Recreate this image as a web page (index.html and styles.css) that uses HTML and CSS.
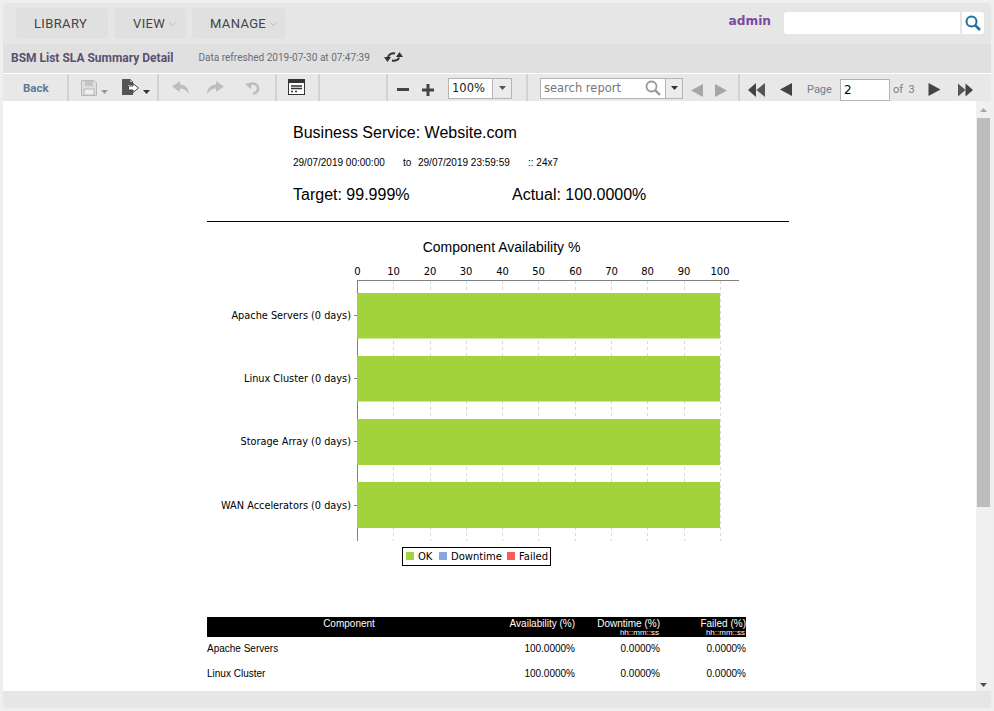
FILE: index.html
```html
<!DOCTYPE html>
<html lang="en">
<head>
<meta charset="utf-8">
<title>BSM List SLA Summary Detail</title>
<link rel="stylesheet" href="styles.css">
</head>
<body>
<div class="frame">
  <header class="topbar">
    <nav class="menu">
      <button class="menu-btn btn-library">LIBRARY</button>
      <button class="menu-btn btn-view">VIEW<svg class="chev" viewBox="0 0 7 4"><path d="M.5.5 3.5 3.5 6.5.5" fill="none" stroke="#bdbdbd"/></svg></button>
      <button class="menu-btn btn-manage">MANAGE<svg class="chev" viewBox="0 0 7 4"><path d="M.5.5 3.5 3.5 6.5.5" fill="none" stroke="#bdbdbd"/></svg></button>
    </nav>
    <span class="user">admin</span>
    <div class="global-search">
      <div class="global-input"></div>
      <div class="global-go">
        <svg width="16" height="16" viewBox="0 0 16 16"><circle cx="6.5" cy="6.5" r="5" fill="none" stroke="#1f6f9f" stroke-width="2"/><path d="M10.3 10.3 15 15" stroke="#1f6f9f" stroke-width="2.6"/></svg>
      </div>
    </div>
  </header>

  <div class="subbar">
    <span class="report-title">BSM List SLA Summary Detail</span>
    <span class="refreshed">Data refreshed 2019-07-30 at 07:47:39</span>
    <svg class="sync" width="19" height="12" viewBox="0 0 19 12"><path d="M4 6.500C4.500 3.500 7.500 1.800 11 2.500" fill="none" stroke="#333" stroke-width="2"/><path d="M15 6.500C14.500 9 11.500 10.200 8 9.500" fill="none" stroke="#333" stroke-width="2"/><path d="M0 6H7L3.500 11Z" fill="#333"/><path d="M12 6H19L15.500 1Z" fill="#333"/></svg>
  </div>

  <div class="toolbar">
    <div class="tgroup g-back"><span class="back">Back</span></div>
    <div class="tgroup g-file">
      <svg class="ic-save" width="16" height="16" viewBox="0 0 16 16"><path d="M.5.500H13L15.500 3V15.500H.5Z" fill="#dedede" stroke="#b8b8b8"/><rect x="4" y="1" width="8" height="5" fill="#c4c4c4"/><rect x="3" y="9" width="10" height="6" fill="#f0f0f0" stroke="#b8b8b8"/></svg>
      <svg class="caret c-save" width="7" height="4" viewBox="0 0 7 4"><path d="M0 0H7L3.500 4Z" fill="#9a9a9a"/></svg>
      <svg class="ic-export" width="17" height="17" viewBox="0 0 17 17"><path d="M0 0H8L11 3V6H6V11H11V16H0Z" fill="#555"/><path d="M8 0 11 3H8Z" fill="#e8e8e8" stroke="#555" stroke-width=".6"/><path d="M6.500 7H11V4.500L16.500 9 11 13.500V11H6.500Z" fill="#fff" stroke="#444"/></svg>
      <svg class="caret c-export" width="7" height="4" viewBox="0 0 7 4"><path d="M0 0H7L3.500 4Z" fill="#333"/></svg>
    </div>
    <div class="tgroup g-edit">
      <svg class="ic-undo" width="17" height="13" viewBox="0 0 17 13"><path d="M8 0 0 5.500 8 11V7.500C11.500 7.500 14.500 9 17 13 16.500 7 13 3.500 8 3.500Z" fill="#bdbdbd"/></svg>
      <svg class="ic-redo" width="17" height="13" viewBox="0 0 17 13"><path d="M9 0 17 5.500 9 11V7.500C5.500 7.500 2.500 9 0 13 .5 7 4 3.500 9 3.500Z" fill="#bdbdbd"/></svg>
      <svg class="ic-reset" width="15" height="14" viewBox="0 0 15 14"><path d="M3.500 5.500A5 5 0 1 1 8 12.500" fill="none" stroke="#bdbdbd" stroke-width="2.600"/><path d="M0 2.500 6.500 2 6 8.500Z" fill="#bdbdbd"/></svg>
    </div>
    <div class="tgroup g-panel">
      <svg class="ic-panel" width="17" height="16" viewBox="0 0 17 16"><rect x=".5" y=".5" width="16" height="15" fill="#fff" stroke="#333"/><rect x="0" y="0" width="17" height="4" fill="#333"/><path d="M3 7H14M3 9.500H14M3 12.500H5M7 12.500H9" stroke="#333" stroke-width="1.300"/></svg>
    </div>
    <div class="tgroup g-blank"></div>
    <div class="tgroup g-zoom">
      <svg class="ic-minus" width="12" height="3" viewBox="0 0 12 3"><rect width="12" height="3" fill="#444"/></svg>
      <svg class="ic-plus" width="12" height="12" viewBox="0 0 12 12"><path d="M4.500 0H7.500V4.500H12V7.500H7.500V12H4.500V7.500H0V4.500H4.500Z" fill="#444"/></svg>
      <div class="combo zoom-combo">
        <span class="combo-text">100%</span>
        <span class="combo-btn"><svg width="7" height="4" viewBox="0 0 7 4"><path d="M0 0H7L3.500 4Z" fill="#555"/></svg></span>
      </div>
    </div>
    <div class="tgroup g-search">
      <div class="combo search-combo">
        <span class="combo-text search-text">search report</span>
        <svg class="ic-find" width="16" height="16" viewBox="0 0 16 16"><circle cx="6.500" cy="6.500" r="5" fill="none" stroke="#999" stroke-width="1.800"/><path d="M10.300 10.300 15 15" stroke="#999" stroke-width="2.400"/></svg>
        <span class="combo-btn"><svg width="7" height="4" viewBox="0 0 7 4"><path d="M0 0H7L3.500 4Z" fill="#333"/></svg></span>
      </div>
      <svg class="ic-hit-prev" width="12" height="13" viewBox="0 0 12 13"><path d="M12 0V13L0 6.500Z" fill="#a6a6a6"/></svg>
      <svg class="ic-hit-next" width="12" height="13" viewBox="0 0 12 13"><path d="M0 0V13L12 6.500Z" fill="#a6a6a6"/></svg>
    </div>
    <div class="tgroup g-pager">
      <svg class="ic-first" width="17" height="14" viewBox="0 0 17 14"><path d="M8 0V14L0 7Z" fill="#444"/><path d="M17 0V14L8.500 7Z" fill="#555"/></svg>
      <svg class="ic-prev" width="12" height="13" viewBox="0 0 12 13"><path d="M12 0V13L0 6.500Z" fill="#444"/></svg>
      <span class="page-label">Page</span>
      <div class="page-input">2</div>
      <span class="page-of">of&nbsp; 3</span>
      <svg class="ic-next" width="13" height="13" viewBox="0 0 12 13"><path d="M0 0V13L12 6.500Z" fill="#444"/></svg>
      <svg class="ic-last" width="15" height="14" viewBox="0 0 16 14"><path d="M0 0V14L8 7Z" fill="#555"/><path d="M8 0V14L16 7Z" fill="#444"/></svg>
    </div>
  </div>

  <div class="viewer">
    <main class="report">
      <div class="report-head">
        <h1 class="service">Business Service: Website.com</h1>
        <p class="period"><span class="p-from">29/07/2019 00:00:00</span><span class="p-to">to</span><span class="p-end">29/07/2019 23:59:59</span><span>:: 24x7</span></p>
        <p class="targets"><span class="t-target">Target: 99.999%</span><span>Actual: 100.0000%</span></p>
      </div>
      <hr class="rule">
      <svg class="chart" width="560" height="340" viewBox="207 236 560 340">
        <text class="chart-title" x="501.500" y="252" text-anchor="middle">Component Availability %</text>
        <g class="tick-labels" text-anchor="middle">
          <text x="357.500" y="275">0</text><text x="393.500" y="275">10</text><text x="430" y="275">20</text><text x="466" y="275">30</text><text x="502.500" y="275">40</text><text x="538.500" y="275">50</text><text x="575.500" y="275">60</text><text x="611.500" y="275">70</text><text x="647.500" y="275">80</text><text x="684" y="275">90</text><text x="720" y="275">100</text>
        </g>
        <g class="grid">
          <path d="M393.500 281V541M430.500 281V541M466.500 281V541M502.500 281V541M538.500 281V541M575.500 281V541M611.500 281V541M647.500 281V541M684.500 281V541M720.500 281V541"/>
        </g>
        <path d="M357 280.500H739" stroke="#808080"/>
        <path d="M357.500 280V541" stroke="#808080"/>
        <g fill="#a2d33b">
          <rect x="357" y="293" width="363" height="45.500"/>
          <rect x="357" y="356" width="363" height="45.500"/>
          <rect x="357" y="419" width="363" height="46"/>
          <rect x="357" y="482" width="363" height="46"/>
        </g>
        <path d="M354 315.500H357M354 378.500H357M354 441.500H357M354 505.500H357" stroke="#808080"/>
        <g class="cat-labels" text-anchor="end">
          <text x="351" y="319">Apache Servers (0 days)</text>
          <text x="351" y="382">Linux Cluster (0 days)</text>
          <text x="351" y="445">Storage Array (0 days)</text>
          <text x="351" y="509">WAN Accelerators (0 days)</text>
        </g>
        <rect x="402.500" y="547.500" width="148" height="18" fill="#fff" stroke="#000"/>
        <rect x="406" y="552" width="8" height="8" fill="#a2d33b"/>
        <rect x="439" y="552" width="8" height="8" fill="#85a9dc"/>
        <rect x="507" y="552" width="8" height="8" fill="#fc5a5a"/>
        <g class="legend-labels">
          <text x="418" y="560">OK</text>
          <text x="451" y="560">Downtime</text>
          <text x="519" y="560">Failed</text>
        </g>
      </svg>
      <table class="summary">
        <thead>
          <tr>
            <th class="col-name">Component</th>
            <th class="col-num">Availability (%)</th>
            <th class="col-num">Downtime (%)<small>hh::mm::ss</small></th>
            <th class="col-num">Failed (%)<small>hh::mm::ss</small></th>
          </tr>
        </thead>
        <tbody>
          <tr><td>Apache Servers</td><td class="num">100.0000%</td><td class="num">0.0000%</td><td class="num">0.0000%</td></tr>
          <tr><td>Linux Cluster</td><td class="num">100.0000%</td><td class="num">0.0000%</td><td class="num">0.0000%</td></tr>
        </tbody>
      </table>
    </main>
    <div class="scrollbar">
      <svg class="sb-arrow" width="7" height="4" viewBox="0 0 7 4"><path d="M3.500 0 7 4H0Z" fill="#a8a8a8"/></svg>
      <div class="sb-thumb"></div>
      <div class="sb-rest"></div>
      <svg class="sb-arrow" width="7" height="4" viewBox="0 0 7 4"><path d="M0 0H7L3.500 4Z" fill="#505050"/></svg>
    </div>
  </div>
  <div class="footer"></div>
</div>
</body>
</html>
```

FILE: styles.css
```css
* { box-sizing: border-box; }
html, body { margin: 0; height: 100%; }
body { background: #f0f0f0; overflow: hidden; font-family: Roboto, "Liberation Sans", sans-serif; }
.frame { width: 994px; height: 711px; padding: 3px 3px 0; display: flex; flex-direction: column; background: #efefef; }

.topbar { height: 41px; flex: none; display: flex; align-items: flex-start; background: #e6e6e6; padding: 5px 7px 0 13px; border-radius: 4px 4px 0 0; }
.menu { display: flex; gap: 6px; }
.menu-btn { height: 31px; border: 0; border-radius: 4px; background: #e0e0e0; color: #444; font: 13px Roboto, sans-serif; letter-spacing: .35px; display: flex; align-items: center; padding: 0; }
.btn-library { width: 92px; padding-left: 18px; }
.btn-view { width: 72px; padding-left: 19px; }
.btn-manage { width: 93px; padding-left: 18px; }
.chev { width: 7px; height: 4px; margin-left: 4px; }
.user { margin-left: auto; margin-top: 6px; font: bold 12.2px "DejaVu Sans", sans-serif; color: #7b4b9d; }
.global-search { display: flex; margin-left: 13px; margin-top: 4px; height: 22px; gap: 2px; }
.global-input { width: 176px; background: #fff; border-radius: 3px 0 0 3px; }
.global-go { width: 22px; background: #fff; border-radius: 0 3px 3px 0; display: flex; align-items: center; justify-content: center; }

.subbar { height: 30px; flex: none; display: flex; align-items: center; background: #e0e0e0; padding: 0 0 2px 8px; border-bottom: 1px solid #fff; }
.report-title { font-weight: 700; font-size: 12px; color: #5b5070; }
.refreshed { font-size: 10.05px; color: #666e78; margin-left: 25px; }
.sync { margin-left: 14px; margin-bottom: 1px; }

.toolbar { height: 27px; flex: none; display: flex; background: #e8e8e8; }
.tgroup { height: 27px; display: flex; align-items: center; border-right: 2px solid #d2d2d2; flex: none; }
.g-back { width: 66px; padding-left: 20px; }
.back { font-size: 11.5px; font-weight: 700; color: #5f7a94; }
.g-file { width: 90px; padding-left: 12px; }
.c-save { margin: 9px 0 0 4px; }
.ic-export { margin-left: 14px; }
.c-export { margin: 9px 0 0 4px; }
.g-edit { width: 118px; padding-left: 13px; }
.ic-redo { margin-left: 18px; }
.ic-reset { margin-left: 21px; }
.g-panel { width: 43px; padding-left: 11px; }
.ic-panel { margin-bottom: 2px; }
.g-blank { width: 68px; }
.g-zoom { width: 140px; padding-left: 9px; }
.ic-minus { margin-top: 4px; }
.ic-plus { margin-left: 13px; margin-top: 5px; }
.combo { display: flex; align-items: center; background: #fff; border: 1px solid #b4b4b4; }
.zoom-combo { width: 64px; height: 21px; margin-left: 14px; margin-top: 1px; }
.combo-text { flex: 1; font: 11.5px "DejaVu Sans", sans-serif; color: #222; padding-left: 3px; }
.combo-btn { width: 19px; align-self: stretch; background: #ececec; border-left: 1px solid #b4b4b4; display: flex; align-items: center; justify-content: center; }
.g-search { width: 212px; padding-left: 12px; }
.search-combo { width: 143px; height: 21px; margin-top: 1px; }
.search-text { color: #777; font-size: 11.5px; }
.ic-find { margin-right: 4px; }
.search-combo .combo-btn { width: 17px; }
.ic-hit-prev { margin-left: 8px; margin-top: 6px; }
.ic-hit-next { margin-left: 12px; margin-top: 6px; }
.g-pager { flex: 1; border-right: 0; padding-left: 8px; padding-top: 4px; }
.ic-prev { margin-left: 15px; }
.page-label { margin-left: 15px; font-size: 11px; color: #6b7f96; }
.page-input { width: 50px; height: 22px; margin-left: 8px; background: #fff; border: 1px solid #b4b4b4; font: 12px "DejaVu Sans", sans-serif; color: #000; padding: 3px 0 0 3px; }
.page-of { margin-left: 3px; width: 31px; font-size: 11px; color: #6b7f96; }
.ic-next { margin-left: 4px; }
.ic-last { margin-left: 17px; }

.viewer { height: 590px; flex: none; display: flex; background: #fff; }
.report { width: 973px; height: 590px; overflow: hidden; padding: 23px 0 0 204px; flex: none; color: #000; font-family: "Liberation Sans", sans-serif; }
.report-head { padding-left: 86px; }
.service { margin: 0; font-size: 16px; font-weight: 400; line-height: 18px; }
.period { margin: 15px 0 0; font-size: 10px; line-height: 12px; display: flex; }
.p-from { width: 110px; }
.p-to { width: 15px; }
.p-end { width: 110px; }
.targets { margin: 17px 0 0; font-size: 16px; line-height: 18px; display: flex; }
.t-target { width: 219px; }
.rule { width: 582px; height: 1px; margin: 17px 0 0; border: 0; background: #000; }
.chart { display: block; margin-top: 14px; }
.chart-title { font: 14px "Liberation Sans", sans-serif; fill: #000; }
.tick-labels text, .legend-labels text { font: 10px "DejaVu Sans", sans-serif; fill: #000; }
.cat-labels text { font: 9.75px "DejaVu Sans", sans-serif; fill: #000; }
.grid path { stroke: #d8d8d8; stroke-dasharray: 3 3; fill: none; }
.summary { width: 539px; margin-top: 41px; border-collapse: collapse; table-layout: fixed; font-size: 10px; }
.summary th { background: #000; color: #fff; font-weight: 400; font-size: 10px; height: 20px; padding: 1px 0 0; vertical-align: top; line-height: 11px; }
.summary th small { display: block; font-size: 8px; line-height: 7px; padding-right: 1px; }
.col-name { width: 284px; text-align: center; }
.col-num { text-align: right; }
.summary th:nth-child(2) { width: 84px; }
.summary th:nth-child(3) { width: 85px; }
.summary td { height: 25px; padding: 0 0 2px; line-height: 12px; }
.summary .num { text-align: right; }

.scrollbar { width: 15px; flex: none; background: #f0f0f0; display: flex; flex-direction: column; align-items: center; padding: 7px 0 4px; }
.sb-thumb { width: 13px; height: 389px; margin-top: 6px; background: #bdbdbd; flex: none; }
.sb-rest { flex: 1; }
.footer { flex: 1; background: #e6e6e6; margin-bottom: 3px; border-radius: 0 0 4px 4px; }
```
